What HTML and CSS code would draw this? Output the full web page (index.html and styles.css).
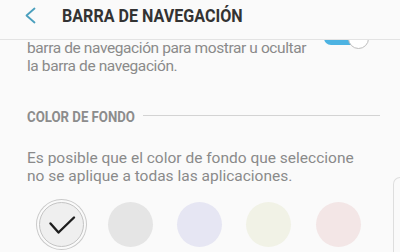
FILE: index.html
```html
<!DOCTYPE html>
<html lang="es">
<head>
    <meta charset="UTF-8">
    <title>Barra de navegación</title>
    <meta name="viewport" content="width=device-width, initial-scale=1.0">
    <link rel="stylesheet" href="styles.css">
</head>
<body>

<div class="header">
    <svg class="back" width="14" height="18" viewBox="0 0 14 18">
        <polyline points="11.5,1.5 3.5,8.5 11.5,15.5" fill="none" stroke="#4a9fbd" stroke-width="1.8" stroke-linecap="round" stroke-linejoin="round"/>
    </svg>
    <h1 class="title"><span>BARRA DE NAVEGACIÓN</span></h1>
</div>

<div class="content">
    <div class="toggle"><div class="thumb"></div></div>
    <p class="desc desc-top">barra de navegación para mostrar u ocultar la barra de navegación.</p>

    <div class="section-head">
        <span class="section-label">COLOR DE FONDO</span>
        <div class="section-line"></div>
    </div>

    <p class="desc desc-note">Es posible que el color de fondo que seleccione no se aplique a todas las aplicaciones.</p>

    <div class="swatches">
        <div class="swatch selected" style="background-color: #efefef;">
            <svg width="45" height="45" viewBox="0 0 45 45">
                <polyline points="11.5,21.5 19.5,30.5 35,15.5" fill="none" stroke="#1e1e1e" stroke-width="2.4" stroke-linecap="round" stroke-linejoin="round"/>
            </svg>
        </div>
        <div class="swatch" style="background-color: #e5e5e5;"></div>
        <div class="swatch" style="background-color: #e6e6f3;"></div>
        <div class="swatch" style="background-color: #f1f2e6;"></div>
        <div class="swatch" style="background-color: #f3e6e6;"></div>
    </div>

    <div class="next-card"></div>
</div>

</body>
</html>
```

FILE: styles.css
```css
body {
    margin: 0;
    background-color: #fafafa;
    font-family: Roboto, "Noto Sans", sans-serif;
    overflow: hidden;
}

.header {
    position: relative;
    z-index: 2;
    height: 40px;
    box-sizing: border-box;
    display: flex;
    align-items: flex-start;
    padding: 6px 0 0 23px;
    background-color: #fafafa;
    border-bottom: 1px solid #e3e3e3;
}

.back {
    margin-top: 1px;
}

.title {
    margin: 0 0 0 25px;
    font-size: 17.5px;
    line-height: 20px;
    font-weight: 700;
    color: #333333;
}
.title span {
    display: inline-block;
    transform: scaleX(0.92);
    transform-origin: left center;
    white-space: nowrap;
}

.content {
    position: relative;
    height: 212px;
    overflow: hidden;
}

.toggle {
    position: absolute;
    top: -9px;
    left: 324px;
    width: 42px;
    height: 14px;
    border-radius: 7px;
    background-color: #4db3e2;
}
.toggle .thumb {
    position: absolute;
    right: -3px;
    top: -3px;
    width: 19px;
    height: 19px;
    border-radius: 50%;
    background-color: #ffffff;
    border: 1px solid #bdbdbd;
}

.desc {
    margin: 0;
    padding-left: 27px;
    font-size: 15.5px;
    line-height: 17.5px;
    color: #8a8a8a;
}
.desc-top {
    width: 285px;
    letter-spacing: -0.4px;
}
.desc-note {
    width: 335px;
    margin-top: 24px;
}

.section-head {
    display: flex;
    align-items: center;
    margin: 33px 20px 0 27px;
    height: 18px;
}
.section-label {
    display: inline-block;
    width: 112px;
    font-size: 15px;
    line-height: 18px;
    font-weight: 700;
    color: #8c8c8c;
    white-space: nowrap;
    transform: scaleX(0.88);
    transform-origin: left center;
}
.section-line {
    flex: 1;
    height: 1px;
    margin-bottom: 4px;
    margin-left: 4px;
    background-color: #d3d3d3;
}

.swatches {
    display: flex;
    gap: 24.3px;
    margin-top: 17px;
    padding-left: 38.5px;
}
.swatch {
    width: 45px;
    height: 45px;
    border-radius: 50%;
    flex-shrink: 0;
}
.swatch.selected {
    box-sizing: border-box;
    border: 1px solid #c4c4c4;
    box-shadow: 0 0 0 2px #fafafa, 0 0 0 3px #c9c9c9;
}
.swatch.selected svg {
    display: block;
    margin: -1px;
}

.next-card {
    position: absolute;
    left: 393px;
    top: 137px;
    width: 7px;
    height: 75px;
    box-sizing: border-box;
    border-top: 1px solid #dedede;
    border-left: 1px solid #dedede;
    border-top-left-radius: 8px;
}
```
